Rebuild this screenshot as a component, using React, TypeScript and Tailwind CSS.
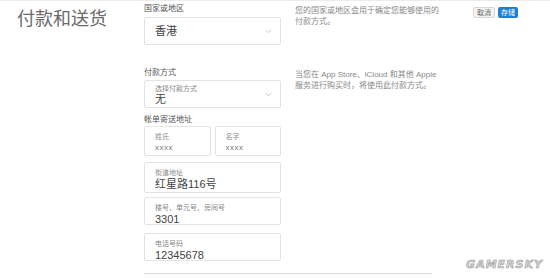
import { ChevronDown } from "lucide-react";

const font = { fontFamily: '"Liberation Sans", "Noto Sans CJK SC", sans-serif' };

function Field({
  label,
  value,
  className = "",
  small = false,
}: {
  label: string;
  value: string;
  className?: string;
  small?: boolean;
}) {
  return (
    <div className={`flex flex-col rounded-[2px] border border-[#e3e3e3] bg-white pl-[10px] ${className}`}>
      <span className="mt-[5px] text-[7px] leading-[9px] text-[#8a8a8a]">{label}</span>
      <span
        className={
          small
            ? "mt-[2px] text-[8px] leading-[10px] tracking-[0.5px] text-[#777]"
            : "mt-[1px] text-[11px] leading-[12px] text-[#444]"
        }
      >
        {value}
      </span>
    </div>
  );
}

export default function App() {
  return (
    <div className="relative h-[278px] w-[550px] overflow-hidden border-t border-[#ececec] bg-white" style={font}>
      <div className="flex items-start">
        <div className="w-[144px] shrink-0 pl-[17px] pt-[7px] text-[18px] leading-[22px] text-[#6b6b6b]">
          付款和送货
        </div>

        <div className="flex flex-col pt-[3px]">
          {/* country */}
          <div className="flex">
            <div className="flex w-[137px] flex-col">
              <span className="text-[8px] leading-[10px] text-[#555]">国家或地区</span>
              <div className="mt-[3px] flex h-[28px] items-center justify-between rounded-[2px] border border-[#e3e3e3] pl-[10px] pr-[7px]">
                <span className="text-[11px] text-[#444]">香港</span>
                <ChevronDown size={9} strokeWidth={1.5} className="text-[#999]" />
              </div>
            </div>
            <p className="ml-[14px] mt-[1px] w-[150px] text-[8px] leading-[11px] text-[#888]">
              您的国家或地区会用于确定您能够使用的付款方式。
            </p>
          </div>

          {/* payment */}
          <div className="mt-[23px] flex">
            <div className="flex w-[137px] flex-col">
              <span className="text-[8px] leading-[10px] text-[#555]">付款方式</span>
              <div className="mt-[2px] flex h-[28px] items-center justify-between rounded-[2px] border border-[#e3e3e3] pl-[10px] pr-[7px]">
                <div className="flex flex-col">
                  <span className="text-[7px] leading-[9px] text-[#8a8a8a]">选择付款方式</span>
                  <span className="text-[11px] leading-[12px] text-[#444]">无</span>
                </div>
                <ChevronDown size={9} strokeWidth={1.5} className="text-[#999]" />
              </div>
            </div>
            <p className="ml-[14px] mt-[1px] w-[150px] text-[8px] leading-[11px] text-[#888]">
              当您在 App Store、iCloud 和其他 Apple
              <br />
              服务进行购买时，将使用此付款方式。
            </p>
          </div>

          {/* billing address */}
          <div className="mt-[7px] flex w-[137px] flex-col">
            <span className="text-[8px] leading-[10px] text-[#555]">帐单寄送地址</span>
            <div className="mt-[1px] flex gap-[4px]">
              <Field label="姓氏" value="xxxx" small className="h-[30px] flex-1" />
              <Field label="名字" value="xxxx" small className="h-[30px] flex-1" />
            </div>
            <Field label="街道地址" value="红星路116号" className="mt-[6px] h-[31px]" />
            <Field label="楼号、单元号、房间号" value="3301" className="mt-[4px] h-[28px]" />
            <Field label="电话号码" value="12345678" className="mt-[8px] h-[28px]" />
            <div className="mt-[12px] h-px w-[288px] bg-[#dcdcdc]" />
          </div>
        </div>

        <div className="ml-auto mr-[32px] mt-[6px] flex items-start gap-[3px]">
          <span className="rounded-[2px] border border-[#d6d6d6] bg-[#f4f4f4] px-[3px] text-[7px] leading-[9px] text-[#666]">
            取消
          </span>
          <span className="rounded-[2px] bg-[#1f7fd4] px-[3px] text-[7px] leading-[11px] text-white">存储</span>
        </div>
      </div>

      <span
        className="absolute bottom-[5px] right-[7px] text-[11px] font-bold italic tracking-[1px] text-[#d9d9d9]"
        style={{ fontFamily: '"DejaVu Sans", sans-serif', WebkitTextStroke: "0.6px #9a9a9a" }}
      >
        GAMERSKY
      </span>
    </div>
  );
}
